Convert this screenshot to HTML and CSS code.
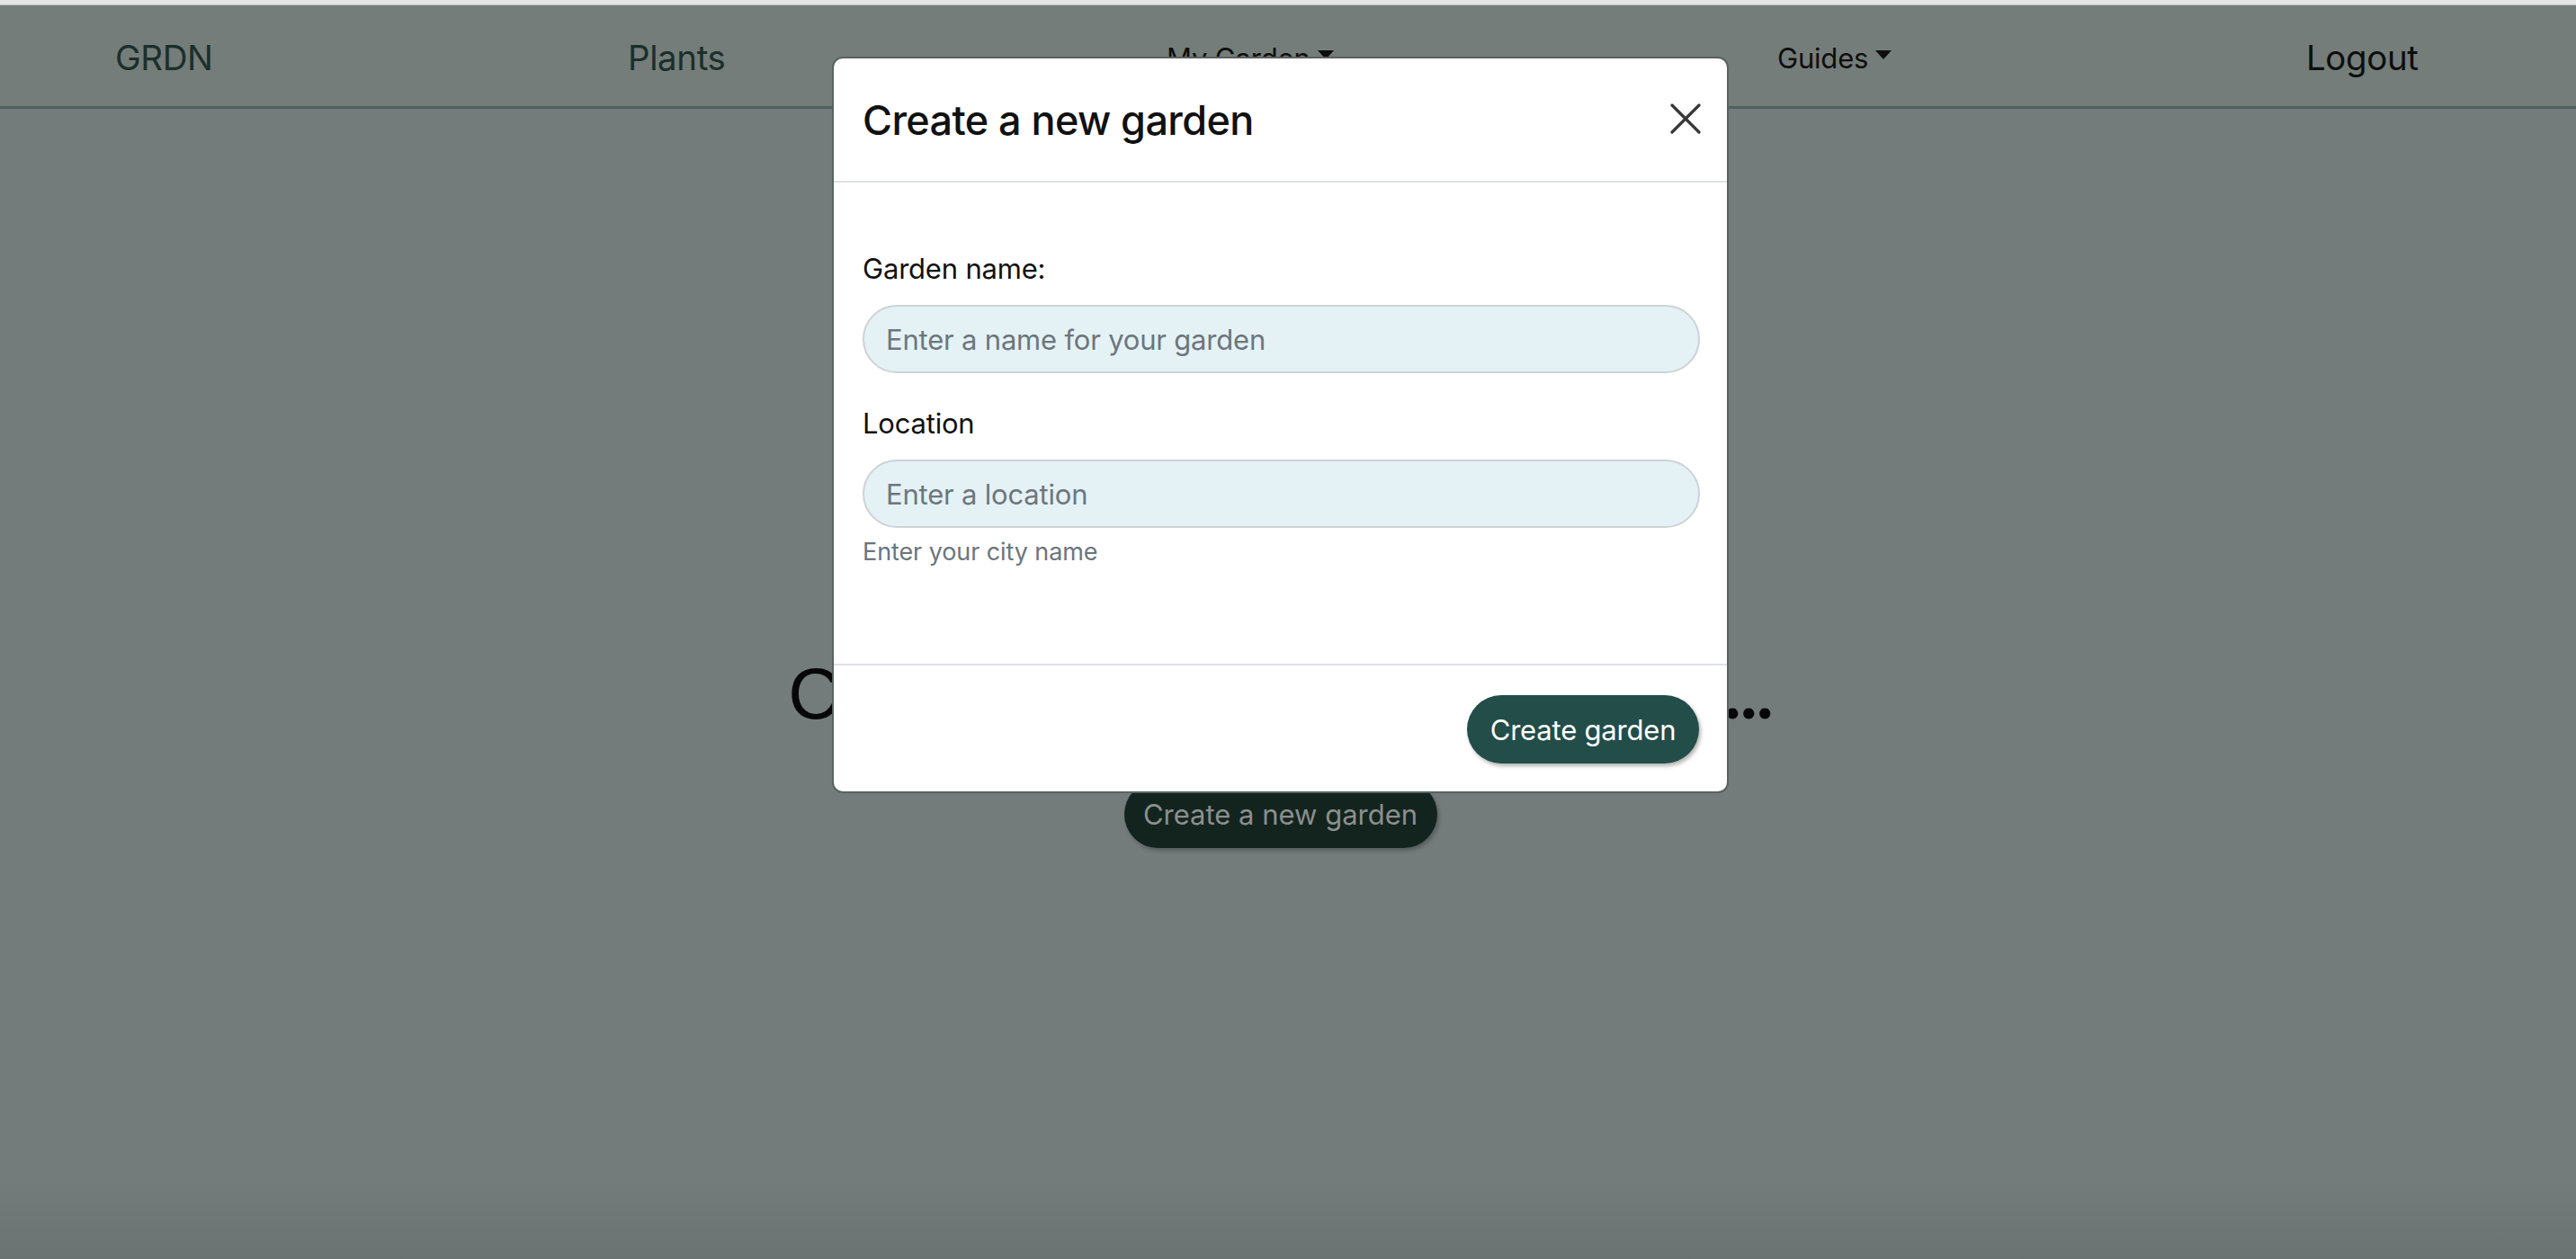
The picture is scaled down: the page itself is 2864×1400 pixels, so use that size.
FILE: index.html
```html
<!DOCTYPE html>
<html lang="en">
<head>
<meta charset="utf-8">
<title>GRDN</title>
<link rel="stylesheet" href="styles.css">
</head>
<body>
<div class="topstrip"></div>
<nav class="navbar">
  <a class="nav-brand">GRDN</a>
  <a class="nav-link">Plants</a>
  <a class="nav-drop">My Garden <span class="caret"></span></a>
  <a class="nav-drop">Guides <span class="caret"></span></a>
  <a class="nav-logout">Logout</a>
</nav>
<main class="main">
  <h1 class="empty-title">Create a garden to get started<span class="dots">...</span></h1>
  <button class="btn-back">Create a new garden</button>
</main>

<div class="modal">
  <div class="modal-header">
    <h2 class="modal-title">Create a new garden</h2>
    <button class="btn-close" aria-label="Close">
      <svg width="34" height="34" viewBox="0 0 34 34"><path d="M2 2 L32 32 M32 2 L2 32" stroke="#383838" stroke-width="3.2" stroke-linecap="round"/></svg>
    </button>
  </div>
  <div class="modal-body">
    <label class="form-label">Garden name:</label>
    <input class="form-control" type="text" placeholder="Enter a name for your garden">
    <label class="form-label second">Location</label>
    <input class="form-control" type="text" placeholder="Enter a location">
    <div class="form-text">Enter your city name</div>
  </div>
  <div class="modal-footer">
    <button class="btn-primary">Create garden</button>
  </div>
</div>
<div class="vignette"></div>
</body>
</html>
```
FILE: styles.css
```css
* { box-sizing: border-box; }
html, body { margin: 0; padding: 0; }
body {
  width: 2864px;
  height: 1400px;
  overflow: hidden;
  background: #737b7b;
  font-family: Inter, "Noto Sans", sans-serif;
  position: relative;
}
.topstrip {
  height: 6px;
  background: #e3e4e4;
  border-bottom: 1px solid #b9bcbb;
}
.navbar {
  height: 115px;
  background: #747d79;
  border-bottom: 3px solid #4c625c;
  display: grid;
  grid-template-columns: 570px 599px 679px 588px auto;
  align-items: center;
  padding: 4px 0 0 128px;
}
.navbar a { text-decoration: none; white-space: nowrap; }
.nav-brand, .nav-link {
  font-size: 38.5px;
  color: #1b2f2b;
  letter-spacing: -0.4px;
}
.nav-drop {
  font-size: 31px;
  color: #0e0e0e;
  display: inline-flex;
  align-items: center;
  gap: 8px;
  letter-spacing: -0.2px;
}
.caret {
  display: inline-block;
  width: 0; height: 0;
  border-left: 9px solid transparent;
  border-right: 9px solid transparent;
  border-top: 10px solid #0e0e0e;
  margin-top: -6px;
}
.nav-logout {
  font-size: 38.5px;
  color: #0e0e0e;
  letter-spacing: -0.4px;
}
.main {
  display: flex;
  flex-direction: column;
  align-items: center;
  padding: 605px 17px 0 0;
}
.empty-title {
  margin: 0;
  font-family: "Liberation Sans", Arial, sans-serif;
  font-weight: 400;
  font-size: 80px;
  line-height: 92px;
  height: 92px;
  color: #070707;
  letter-spacing: -0.9px;
  white-space: nowrap;
}
.dots {
  font-family: Lato, "Liberation Sans", sans-serif;
  font-weight: 700;
  letter-spacing: -1px;
  line-height: 0;
}
.btn-back {
  margin-top: 50px;
  width: 348px;
  height: 75px;
  border: none;
  border-radius: 38px;
  background: #13241f;
  color: #8b8f8d;
  font-family: Inter, sans-serif;
  font-size: 31px;
  box-shadow: 2px 3px 4px rgba(0,0,0,0.25);
}
.modal {
  position: absolute;
  left: 925px;
  top: 63px;
  width: 997px;
  background: #fff;
  border: 2px solid #59625f;
  border-radius: 12px;
}
.modal-header {
  height: 138px;
  display: flex;
  align-items: center;
  justify-content: space-between;
  padding: 0 29px 0 32px;
  border-bottom: 2px solid #dfe1e5;
}
.modal-title {
  margin: 0;
  font-size: 45px;
  font-weight: 500;
  color: #111;
  letter-spacing: -0.6px;
}
.btn-close {
  border: none;
  background: none;
  padding: 0;
  width: 34px;
  height: 34px;
  display: flex;
  margin-top: -2px;
}
.modal-body {
  padding: 72px 30px 103px 32px;
  display: flex;
  flex-direction: column;
}
.form-label {
  font-size: 31px;
  line-height: 48px;
  color: #111;
  margin-bottom: 16px;
  letter-spacing: -0.2px;
}
.form-label.second { margin-top: 32px; }
.form-control {
  height: 76px;
  border: 2px solid #cdd3d6;
  border-radius: 38px;
  background: #e4f2f6;
  padding: 0 24px;
  font-family: Inter, sans-serif;
  font-size: 31px;
  color: #222;
  outline: none;
}
.form-control::placeholder { color: #6e767c; letter-spacing: -0.2px; }
.form-text {
  margin-top: 6px;
  font-size: 27px;
  line-height: 42px;
  color: #6c757c;
  letter-spacing: -0.1px;
}
.modal-footer {
  border-top: 2px solid #dfe1e5;
  padding: 33px 31px 31px 32px;
  display: flex;
  justify-content: flex-end;
}
.btn-primary {
  width: 258px;
  height: 76px;
  border: none;
  border-radius: 38px;
  background: #234d49;
  color: #fff;
  font-family: Inter, sans-serif;
  font-size: 31px;
  letter-spacing: -0.2px;
  box-shadow: 2px 3px 4px rgba(0,0,0,0.3);
}
.vignette {
  position: absolute;
  left: 0; right: 0; bottom: 0;
  height: 90px;
  background: linear-gradient(to bottom, rgba(0,0,0,0), rgba(0,0,0,0.07));
  pointer-events: none;
}
```
